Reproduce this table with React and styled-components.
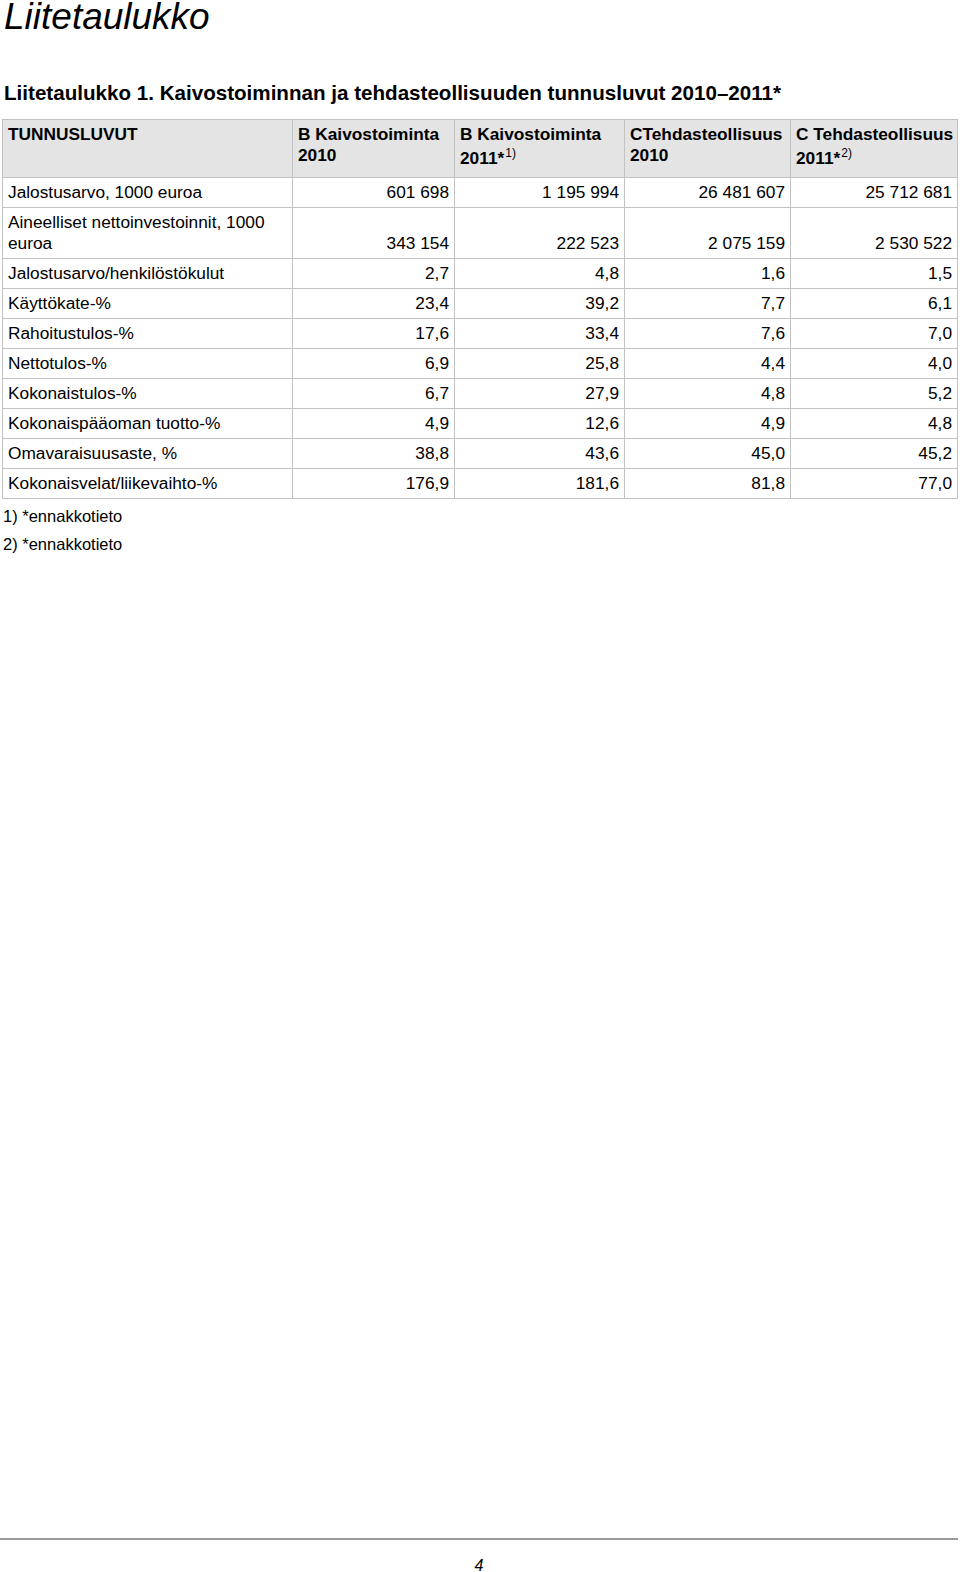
import React from "react";
import styled, { createGlobalStyle } from "styled-components";

const Global = createGlobalStyle`
  html, body { margin: 0; padding: 0; background: #fff; }
  body { font-family: "Liberation Sans", Arial, sans-serif; color: #000; }
`;

const Page = styled.div`
  min-height: 1572px;
  box-sizing: border-box;
  display: flex;
  flex-direction: column;
  padding: 0 2px;
`;

const Title = styled.h1`
  margin: 0 0 0 2px;
  padding-top: 3px;
  font-size: 37px;
  line-height: 28px;
  font-style: italic;
  font-weight: normal;
`;

const Subtitle = styled.h2`
  margin: 50px 0 14px 2px;
  font-size: 20.6px;
  line-height: 24px;
  font-weight: bold;
`;

const Table = styled.table`
  border-collapse: collapse;
  table-layout: fixed;
  width: 956px;
  font-size: 17.3px;
  line-height: 21px;
`;

const HeadCell = styled.th`
  background: #e4e4e4;
  border: 1px solid #c2c2c2;
  padding: 4px 2px 0 5px;
  height: 58px;
  text-align: left;
  vertical-align: top;
  font-weight: bold;
  white-space: nowrap;
  overflow: hidden;
  box-sizing: border-box;
`;

const Sup = styled.sup`
  font-size: 12px;
  font-weight: normal;
  line-height: 0;
  vertical-align: 7px;
  margin-left: 1px;
`;

const SecondLine = styled.span`
  display: block;
  line-height: ${(p) => (p.$sup ? "24px" : "21px")};
  padding-top: ${(p) => (p.$sup ? "1px" : "0")};
`;

const LabelCell = styled.td`
  border: 1px solid #c2c2c2;
  padding: 4px 5px;
  vertical-align: top;
  text-align: left;
`;

const NumCell = styled.td`
  border: 1px solid #c2c2c2;
  padding: 4px 5px;
  vertical-align: bottom;
  text-align: right;
`;

const Notes = styled.div`
  margin: 3px 0 0 1px;
  font-size: 16.5px;
  line-height: 28px;
`;

const Footer = styled.footer`
  margin-top: auto;
  margin-left: -2px;
  border-top: 2px solid #9a9a9a;
  height: 34px;
  display: flex;
  justify-content: center;
  padding-top: 17px;
  box-sizing: border-box;
`;

const PageNum = styled.span`
  font-size: 16px;
  font-style: italic;
  line-height: 18px;
`;

const cols = [290, 162, 170, 166, 167];

const headers = [
  { a: "TUNNUSLUVUT" },
  { a: "B Kaivostoiminta", b: "2010" },
  { a: "B Kaivostoiminta", b: "2011*", sup: "1)" },
  { a: "CTehdasteollisuus", b: "2010" },
  { a: "C Tehdasteollisuus", b: "2011*", sup: "2)" },
];

const rows = [
  ["Jalostusarvo, 1000 euroa", "601 698", "1 195 994", "26 481 607", "25 712 681"],
  ["Aineelliset nettoinvestoinnit, 1000 euroa", "343 154", "222 523", "2 075 159", "2 530 522"],
  ["Jalostusarvo/henkilöstökulut", "2,7", "4,8", "1,6", "1,5"],
  ["Käyttökate-%", "23,4", "39,2", "7,7", "6,1"],
  ["Rahoitustulos-%", "17,6", "33,4", "7,6", "7,0"],
  ["Nettotulos-%", "6,9", "25,8", "4,4", "4,0"],
  ["Kokonaistulos-%", "6,7", "27,9", "4,8", "5,2"],
  ["Kokonaispääoman tuotto-%", "4,9", "12,6", "4,9", "4,8"],
  ["Omavaraisuusaste, %", "38,8", "43,6", "45,0", "45,2"],
  ["Kokonaisvelat/liikevaihto-%", "176,9", "181,6", "81,8", "77,0"],
];

export default function App() {
  return (
    <>
      <Global />
      <Page>
        <Title>Liitetaulukko</Title>
        <Subtitle>Liitetaulukko 1. Kaivostoiminnan ja tehdasteollisuuden tunnusluvut 2010–2011*</Subtitle>
        <Table>
          <colgroup>
            {cols.map((w, i) => (
              <col key={i} style={{ width: w }} />
            ))}
          </colgroup>
          <thead>
            <tr>
              {headers.map((h, i) => (
                <HeadCell key={i}>
                  {h.a}
                  {h.b && (
                    <SecondLine $sup={!!h.sup}>
                      {h.b}
                      {h.sup && <Sup>{h.sup}</Sup>}
                    </SecondLine>
                  )}
                </HeadCell>
              ))}
            </tr>
          </thead>
          <tbody>
            {rows.map((r, i) => (
              <tr key={i}>
                <LabelCell>{r[0]}</LabelCell>
                {r.slice(1).map((v, j) => (
                  <NumCell key={j}>{v}</NumCell>
                ))}
              </tr>
            ))}
          </tbody>
        </Table>
        <Notes>
          <div>1) *ennakkotieto</div>
          <div>2) *ennakkotieto</div>
        </Notes>
        <Footer>
          <PageNum>4</PageNum>
        </Footer>
      </Page>
    </>
  );
}
